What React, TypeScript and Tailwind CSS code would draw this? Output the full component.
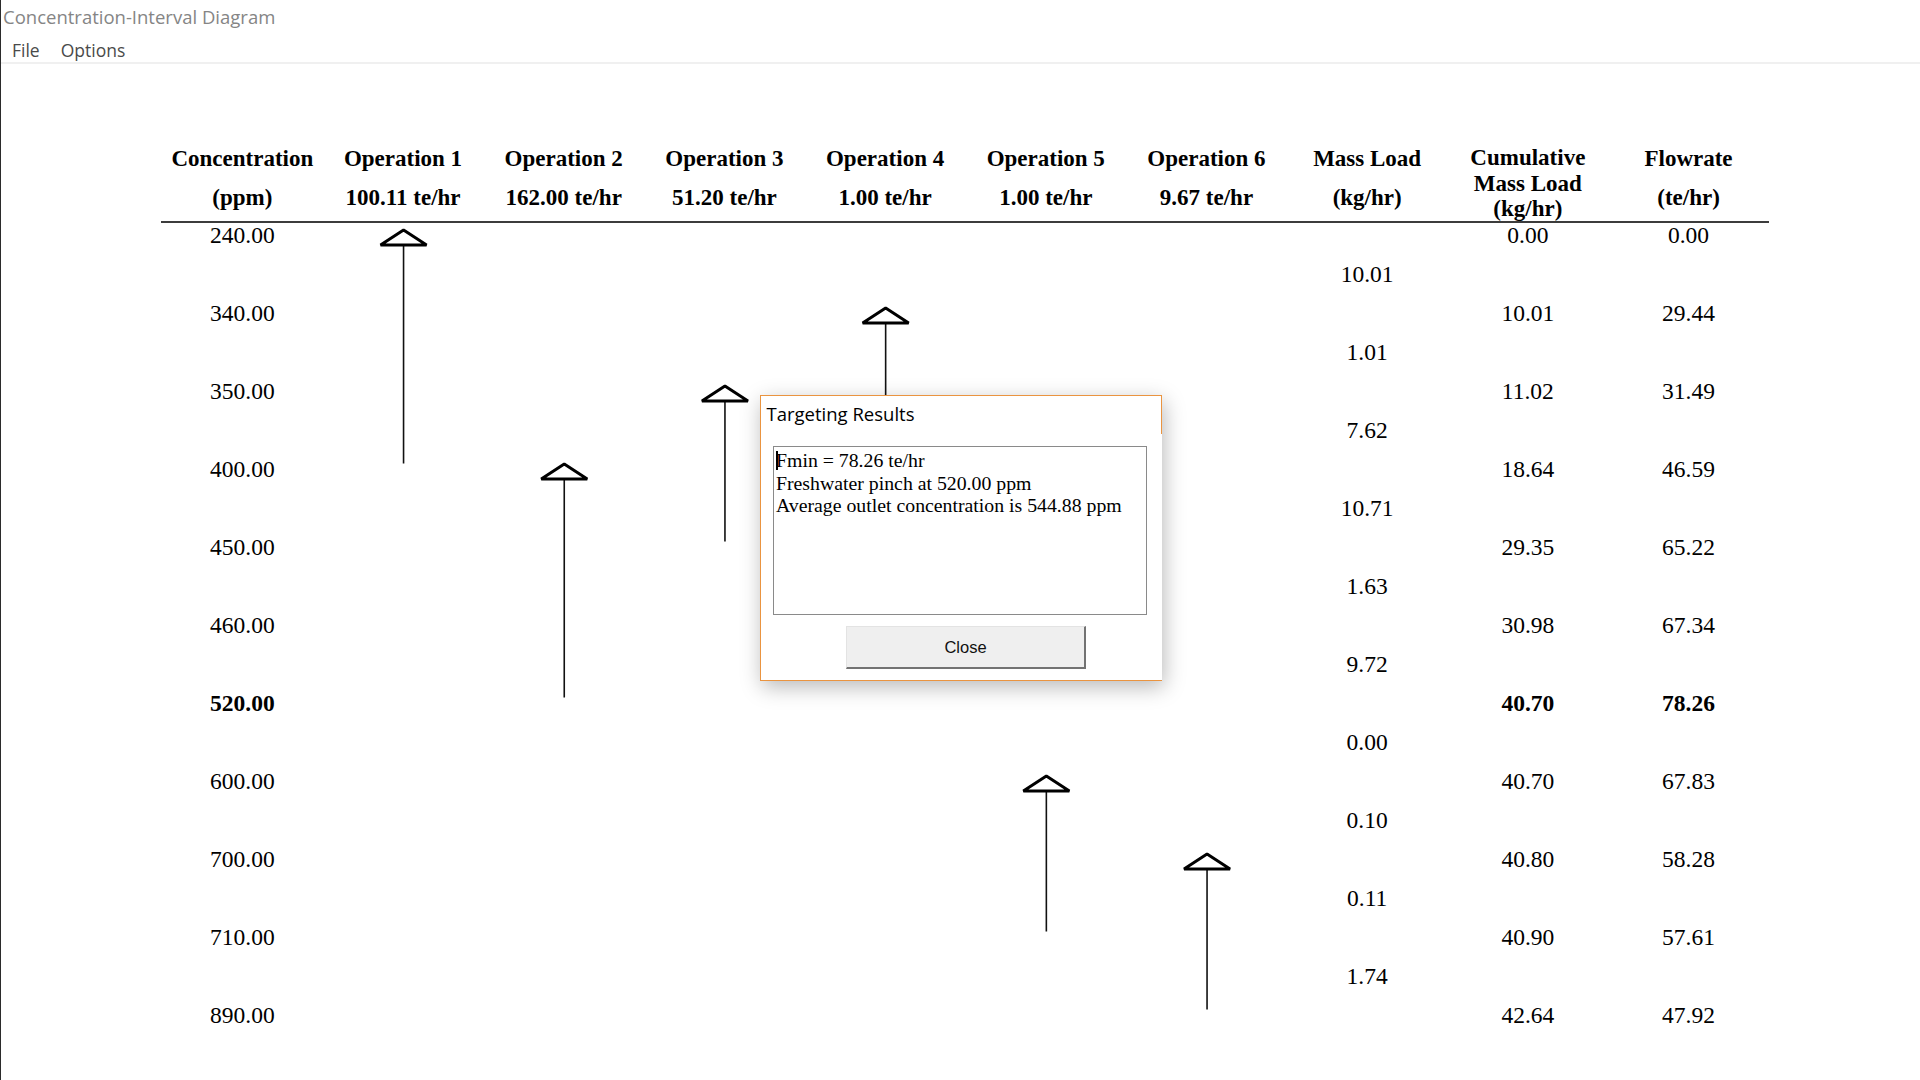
// Concentration-Interval Diagram with the "Targeting Results" dialog on top.
const COL_W = 160.7
const ROW_H = 78

const conc = ['240.00', '340.00', '350.00', '400.00', '450.00', '460.00', '520.00', '600.00', '700.00', '710.00', '890.00']
const massLoad = ['10.01', '1.01', '7.62', '10.71', '1.63', '9.72', '0.00', '0.10', '0.11', '1.74']
const cumulative = ['0.00', '10.01', '11.02', '18.64', '29.35', '30.98', '40.70', '40.70', '40.80', '40.90', '42.64']
const flowrate = ['0.00', '29.44', '31.49', '46.59', '65.22', '67.34', '78.26', '67.83', '58.28', '57.61', '47.92']
const PINCH = 6

const operations = [
  { name: 'Operation 1', flow: '100.11 te/hr', from: 0, to: 3 },
  { name: 'Operation 2', flow: '162.00 te/hr', from: 3, to: 6 },
  { name: 'Operation 3', flow: '51.20 te/hr', from: 2, to: 4 },
  { name: 'Operation 4', flow: '1.00 te/hr', from: 1, to: 5 },
  { name: 'Operation 5', flow: '1.00 te/hr', from: 7, to: 9 },
  { name: 'Operation 6', flow: '9.67 te/hr', from: 8, to: 10 },
]

// 21 half-rows: even = concentration interval boundary, odd = mass load of the interval
function cellsFor(k: number): (string | null)[] {
  const cells: (string | null)[] = Array(10).fill(null)
  if (k % 2 === 0) {
    const r = k / 2
    cells[0] = conc[r]
    cells[8] = cumulative[r]
    cells[9] = flowrate[r]
  } else {
    cells[7] = massLoad[(k - 1) / 2]
  }
  return cells
}

function Arrows() {
  return (
    <svg className="absolute inset-0 pointer-events-none" width={1607} height={819} viewBox="0 0 1607 819">
      {operations.map((op, i) => {
        const x = COL_W * (i + 1.5) + 0.5
        const y = 19.5 + ROW_H * op.from
        const yEnd = 19.5 + ROW_H * op.to - 6
        return (
          <g key={op.name}>
            <line x1={x} y1={y + 10} x2={x} y2={yEnd} stroke="#111" strokeWidth={1.6} />
            <polygon
              points={`${x - 23},${y + 9.5} ${x},${y - 5.5} ${x + 23},${y + 9.5}`}
              fill="white"
              stroke="#000"
              strokeWidth={3}
              strokeLinejoin="bevel"
            />
          </g>
        )
      })}
    </svg>
  )
}

export default function App() {
  return (
    <div className="relative w-[1920px] h-[1080px] bg-white border-l border-[#2b2b2b] overflow-hidden">
      {/* window title + menu */}
      <div className="h-[34px] pl-[2px] flex items-center text-[18.5px] text-[#858585] font-['Open_Sans',sans-serif]">
        Concentration-Interval Diagram
      </div>
      <div className="h-[28px] pt-[4px] pl-[11px] flex items-center gap-[21px] text-[17.5px] text-[#4a4a4a] font-['Open_Sans',sans-serif]">
        <span>File</span>
        <span>Options</span>
      </div>
      <div className="h-[2px] bg-[#f0f0f0]" />

      {/* diagram */}
      <div className="ml-[161px] pt-[74.5px] w-[1607px] text-black font-['Liberation_Serif',serif] text-[23.5px]">
        <div className="grid grid-cols-[repeat(10,160.7px)] h-[82.5px] items-start font-bold text-[23px]">
          <div className="text-center leading-[39px]">
            <div>Concentration</div>
            <div>(ppm)</div>
          </div>
          {operations.map((op) => (
            <div key={op.name} className="text-center leading-[39px] whitespace-nowrap">
              <div>{op.name}</div>
              <div>{op.flow}</div>
            </div>
          ))}
          <div className="text-center leading-[39px]">
            <div>Mass Load</div>
            <div>(kg/hr)</div>
          </div>
          <div className="text-center leading-[25.5px] mt-[6.75px]">
            <div>Cumulative</div>
            <div>Mass Load</div>
            <div>(kg/hr)</div>
          </div>
          <div className="text-center leading-[39px]">
            <div>Flowrate</div>
            <div>(te/hr)</div>
          </div>
        </div>
        <div className="-ml-px h-[2px] bg-[#3c3c3c]" />

        <div className="relative -mt-[7.5px]">
          {Array.from({ length: 21 }, (_, k) => (
            <div key={k} className="grid grid-cols-[repeat(10,160.7px)] h-[39px]">
              {cellsFor(k).map((v, c) => (
                <div
                  key={c}
                  className={`text-center leading-[39px] ${k === PINCH * 2 && v ? 'font-bold' : ''}`}
                >
                  {v}
                </div>
              ))}
            </div>
          ))}
          <Arrows />
        </div>
      </div>

      {/* Targeting Results dialog */}
      <div className="absolute left-[759px] top-[395px] w-[402px] h-[286px] bg-white border border-r-0 border-[#ea9440] shadow-[2px_6px_20px_rgba(0,0,0,0.28)]">
        <span className="absolute right-0 -top-px w-px h-[39px] bg-[#ea9440]" />
        <div className="pl-[5.5px] pt-[4px] leading-[28px] text-[18.5px] text-black font-['Open_Sans',sans-serif]">
          Targeting Results
        </div>
        <div className="ml-[12px] mt-[18px] w-[374px] h-[169px] border-[1.5px] border-[#8a8a8a] pl-[2px] pt-[2px] text-[19.8px] leading-[22.5px] text-black font-['Liberation_Serif',serif]">
          <div className="whitespace-nowrap">
            <span className="inline-block w-[2px] h-[19px] bg-black align-[-3px] -mr-[2px]" />
            Fmin = 78.26 te/hr
          </div>
          <div className="whitespace-nowrap">Freshwater pinch at 520.00 ppm</div>
          <div className="whitespace-nowrap">Average outlet concentration is 544.88 ppm</div>
        </div>
        <button className="block ml-[85px] mt-[11px] w-[240px] h-[43px] bg-[#efefef] border border-t-[#e3e3e3] border-l-[#e3e3e3] border-r-2 border-b-2 border-r-[#737373] border-b-[#737373] text-[16.5px] text-[#111] font-['Liberation_Sans',sans-serif]">
          Close
        </button>
      </div>
    </div>
  )
}
